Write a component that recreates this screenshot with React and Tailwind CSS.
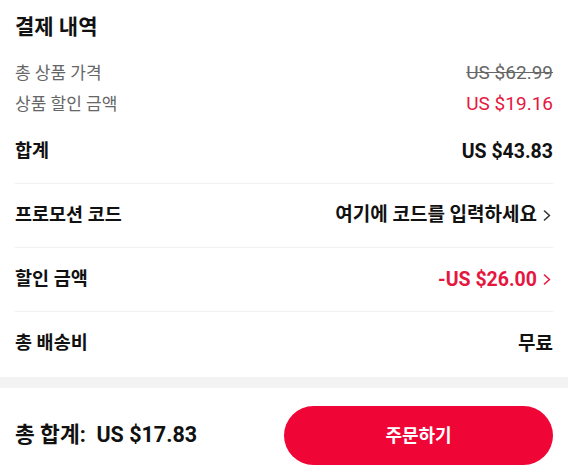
import React from 'react';

const Chevron = ({ className }) => (
  <svg width="8" height="11" viewBox="0 0 8 11" fill="none" className={className}>
    <polyline points="1.5,1 6.5,5.5 1.5,10" stroke="currentColor" strokeWidth="1.6" strokeLinecap="round" strokeLinejoin="round" />
  </svg>
);

const Row = ({ label, children, last }) => (
  <div className={`flex h-[64px] items-center justify-between ${last ? '' : 'border-b border-[#f1f1f1]'}`}>
    <span className="text-[18.5px] font-bold text-[#111]">{label}</span>
    {children}
  </div>
);

export default function App() {
  return (
    <div className="w-[568px] h-[473px] overflow-hidden bg-white font-['Roboto','Noto_Sans_CJK_KR',sans-serif]">
      <div className="px-[15px]">
        <h1 className="h-[50px] pt-[5px] flex items-center text-[21px] font-bold text-[#111]">결제 내역</h1>
        <div className="mt-[8px]">
          <div className="flex h-[31px] items-center justify-between text-[#666]">
            <span className="text-[17px]">총 상품 가격</span>
            <span className="text-[19px] line-through">US $62.99</span>
          </div>
          <div className="flex h-[31px] items-center justify-between">
            <span className="text-[17px] text-[#666]">상품 할인 금액</span>
            <span className="text-[19px] text-[#e5173f]">US $19.16</span>
          </div>
        </div>
        <Row label="합계">
          <span className="text-[19.5px] font-bold text-[#111]">US $43.83</span>
        </Row>
        <Row label="프로모션 코드">
          <span className="flex items-center gap-[6px] text-[19px] font-bold text-[#111]">
            여기에 코드를 입력하세요
            <Chevron className="mr-[2px] text-[#333]" />
          </span>
        </Row>
        <Row label="할인 금액">
          <span className="flex items-center gap-[6px] text-[19.5px] font-bold text-[#e5173f]">
            -US $26.00
            <Chevron className="mr-[2px] text-[#e5173f]" />
          </span>
        </Row>
        <Row label="총 배송비" last>
          <span className="text-[19px] font-bold text-[#111]">무료</span>
        </Row>
      </div>
      <div className="mt-[1px] h-[11px] bg-[#f3f3f3]" />
      <div className="flex items-center justify-between px-[15px] pt-[18px]">
        <span className="text-[21.5px] font-bold text-[#111] whitespace-pre">총 합계:  US $17.83</span>
        <button className="h-[59px] w-[269px] rounded-full bg-[#ef0636] text-[18px] font-bold text-white">
          주문하기
        </button>
      </div>
    </div>
  );
}
